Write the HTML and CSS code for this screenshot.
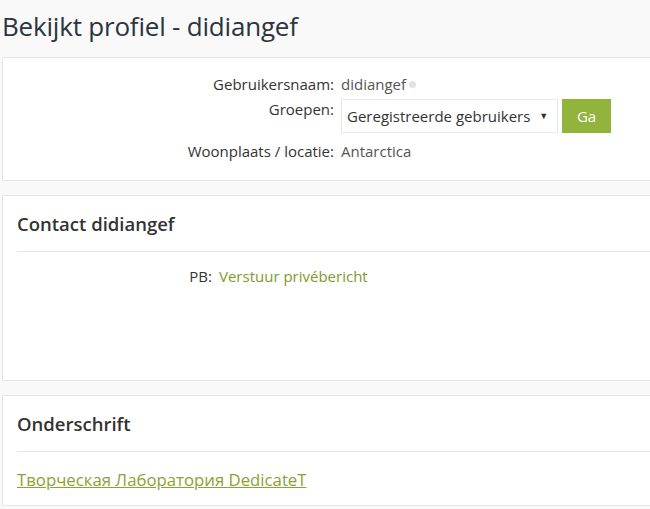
FILE: index.html
```html
<!DOCTYPE html>
<html lang="nl">
<head>
<meta charset="utf-8">
<title>Bekijkt profiel - didiangef</title>
<link rel="stylesheet" href="styles.css">
</head>
<body>
<div class="page">
  <h1 class="title">Bekijkt profiel - didiangef</h1>

  <div class="card card-profile">
    <dl class="details">
      <div class="row">
        <dt>Gebruikersnaam:</dt>
        <dd>didiangef <span class="status-dot"></span></dd>
      </div>
      <div class="row row-groups">
        <dt>Groepen:</dt>
        <dd class="groups">
          <span class="select">Geregistreerde gebruikers <span class="caret">▼</span></span>
          <span class="btn">Ga</span>
        </dd>
      </div>
      <div class="row row-last">
        <dt>Woonplaats / locatie:</dt>
        <dd>Antarctica</dd>
      </div>
    </dl>
  </div>

  <div class="card card-contact">
    <h3 class="card-title">Contact didiangef</h3>
    <dl class="details details-contact">
      <div class="row">
        <dt>PB:</dt>
        <dd><a class="link" href="#">Verstuur privébericht</a></dd>
      </div>
    </dl>
  </div>

  <div class="card card-sig">
    <h3 class="card-title">Onderschrift</h3>
    <div class="signature"><a class="sig-link" href="#">Творческая Лаборатория DedicateT</a></div>
  </div>
</div>
</body>
</html>
```

FILE: styles.css
```css
html, body {
  margin: 0;
  padding: 0;
  overflow: hidden;
}
body {
  background: #f9f9f9;
  font-family: "Open Sans", "Noto Sans", sans-serif;
  color: #333;
  font-size: 15px;
}
.page {
  width: 720px;
  padding-left: 2px;
}
.title {
  margin: 0;
  padding-top: 8px;
  height: 57px;
  box-sizing: border-box;
  font-size: 26px;
  font-weight: 400;
  line-height: 36px;
  color: #2b3440;
  letter-spacing: -0.2px;
}
.card {
  background: #fff;
  border: 1px solid #e6e6e6;
  margin-bottom: 14px;
}
.details {
  margin: 0;
}
.row {
  display: flex;
  line-height: 20px;
}
.row dt {
  width: 331px;
  text-align: right;
  color: #333;
}
.row dd {
  margin: 0 0 0 7px;
  color: #555;
  display: flex;
  align-items: center;
}
.card-profile {
  padding: 16px 0 19px;
}
.row-groups {
  margin-top: 5px;
}
.row-last {
  margin-top: 8px;
}
.status-dot {
  display: inline-block;
  width: 7px;
  height: 7px;
  border-radius: 50%;
  background: #e2e2e2;
  margin-left: 3px;
  margin-top: 1px;
}
.groups {
  align-items: flex-start;
}
.select {
  box-sizing: border-box;
  width: 217px;
  height: 34px;
  border: 1px solid #e8e8e8;
  padding: 0 5px;
  display: flex;
  align-items: center;
  font-size: 15px;
  color: #333;
  background: #fff;
}
.caret {
  font-size: 9px;
  margin-left: 9px;
}
.btn {
  margin-left: 4px;
  width: 49px;
  height: 34px;
  background: #92b33c;
  color: #fff;
  font-size: 15px;
  display: flex;
  align-items: center;
  justify-content: center;
}
.card-title {
  margin: 0 0 0 14px;
  padding: 16px 0 15px;
  font-size: 18.5px;
  font-weight: 600;
  line-height: 24px;
  color: #333;
  border-bottom: 1px solid #e6e6e6;
}
.card-contact {
  padding-bottom: 94px;
}
.details-contact {
  padding-top: 14px;
}
.details-contact .row dt {
  width: 209px;
}
.link {
  color: #7d9b2e;
  text-decoration: none;
}
.card-sig {
  padding-bottom: 15px;
}
.signature {
  padding: 18px 0 0 14px;
  line-height: 20px;
}
.sig-link {
  font-size: 16.75px;
  color: #8aa332;
  text-decoration: underline;
}
```
